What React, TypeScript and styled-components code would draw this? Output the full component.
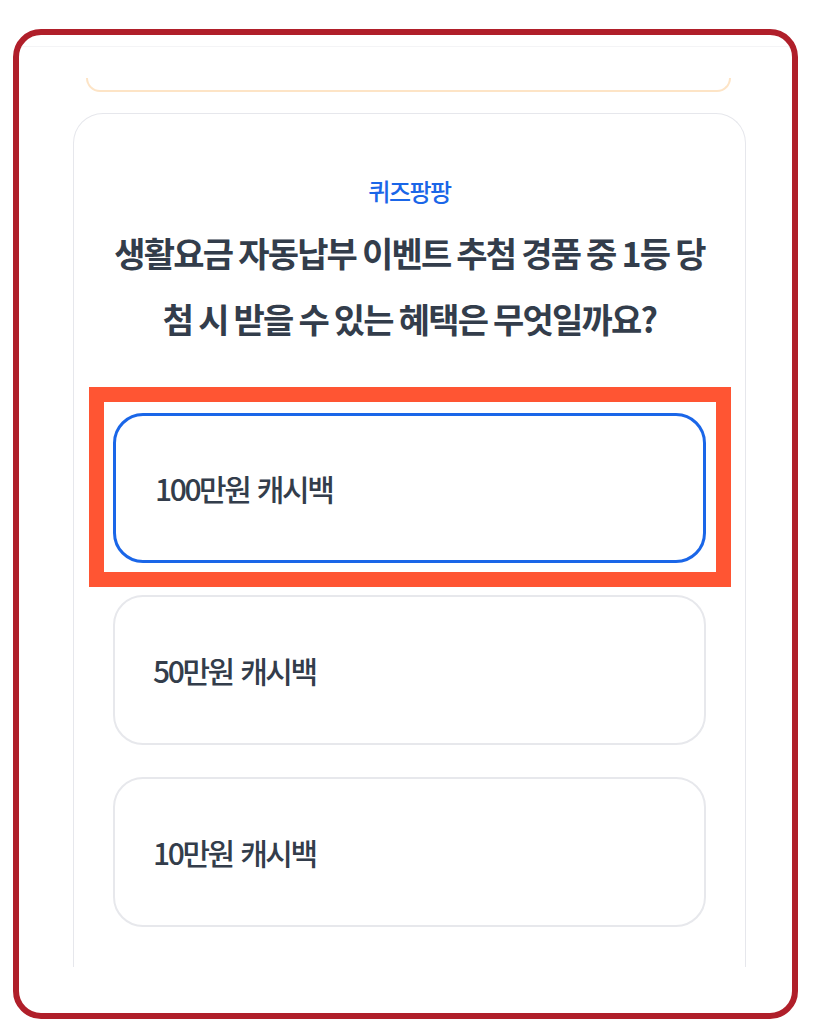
import React from 'react';
import styled, { createGlobalStyle } from 'styled-components';

const GlobalStyle = createGlobalStyle`
  html, body {
    margin: 0;
    padding: 0;
    background: #ffffff;
  }
  body {
    font-family: 'Noto Sans CJK KR', 'Noto Sans', sans-serif;
  }
`;

const options = ['100만원 캐시백', '50만원 캐시백', '10만원 캐시백'];

const App = () => {
  // 첫 번째 보기가 선택된 상태
  const selected = 0;

  return (
    <>
      <GlobalStyle />
      <Frame>
        <Viewport>
          <PrevCard />
          <QuizCard>
            <Label>퀴즈팡팡</Label>
            <Question>
              생활요금 자동납부 이벤트 추첨 경품 중 1등 당
              <br />
              첨 시 받을 수 있는 혜택은 무엇일까요?
            </Question>
            <OptionList>
              {options.map((text, i) => (
                <OptionWrap key={text}>
                  <Option $active={i === selected}>{text}</Option>
                  {i === selected && <Highlight />}
                </OptionWrap>
              ))}
            </OptionList>
          </QuizCard>
        </Viewport>
      </Frame>
    </>
  );
};

export default App;

const Frame = styled.div`
  box-sizing: border-box;
  width: 785px;
  height: 990px;
  margin: 29px 0 0 13px;
  border: 6px solid #b01f2a;
  border-radius: 28px;
  padding: 11px 0 0 0;
  overflow: hidden;
`;

const Viewport = styled.div`
  height: 920px;
  overflow: hidden;
  border-top: 1px solid #f4f4f6;
  padding: 0 46px 0 54px;
  display: flex;
  flex-direction: column;
`;

const PrevCard = styled.div`
  flex: none;
  height: 12px;
  margin: 31px 15px 0 13px;
  border: 2px solid #fde4c6;
  border-top: none;
  border-radius: 0 0 18px 18px;
`;

const QuizCard = styled.div`
  flex: none;
  box-sizing: border-box;
  margin-top: 21px;
  border: 1.5px solid #e6e7ec;
  border-bottom: none;
  border-radius: 30px 30px 0 0;
  padding: 61px 39px 120px 39px;
  display: flex;
  flex-direction: column;
  align-items: center;
`;

const Label = styled.div`
  font-size: 24px;
  line-height: 32px;
  font-weight: 500;
  letter-spacing: -1.5px;
  color: #1a66e8;
`;

const Question = styled.div`
  margin-top: 13px;
  font-size: 34px;
  line-height: 66px;
  font-weight: 700;
  letter-spacing: -1.8px;
  color: #333d4b;
  text-align: center;
  white-space: nowrap;
`;

const OptionList = styled.div`
  align-self: stretch;
  margin-top: 61px;
  display: flex;
  flex-direction: column;
  gap: 32px;
`;

const OptionWrap = styled.div`
  position: relative;
`;

const Option = styled.div<{ $active: boolean }>`
  box-sizing: border-box;
  height: 150px;
  display: flex;
  align-items: center;
  padding-left: ${(p) => (p.$active ? '39px' : '38px')};
  border: ${(p) => (p.$active ? '3px solid #1a66e8' : '2px solid #e7e8ec')};
  border-radius: 30px;
  background: #ffffff;
  font-size: 30px;
  font-weight: 500;
  letter-spacing: -2.4px;
  word-spacing: 3px;
  color: #333d4b;
`;

const Highlight = styled.div`
  position: absolute;
  top: -26px;
  left: -24px;
  right: -25px;
  bottom: -24px;
  border: 15px solid #ff5533;
  pointer-events: none;
`;
